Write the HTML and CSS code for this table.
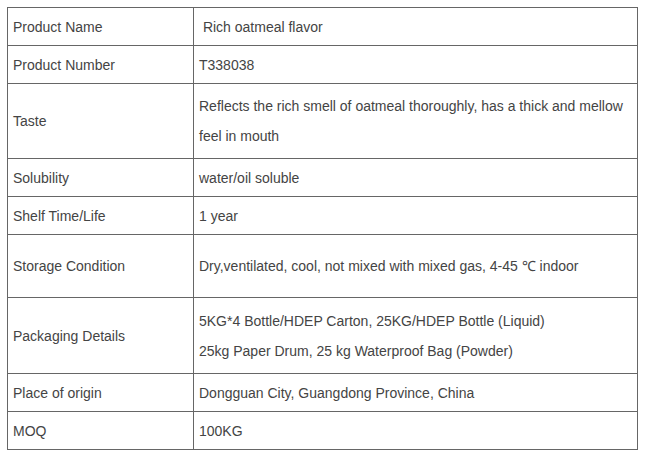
FILE: index.html
```html
<!DOCTYPE html>
<html>
<head>
<meta charset="utf-8">
<link rel="stylesheet" href="styles.css">
</head>
<body>
<table class="spec">
  <tr class="r38"><td class="k">Product Name</td><td class="v">&nbsp;Rich oatmeal flavor</td></tr>
  <tr class="r38"><td class="k">Product Number</td><td class="v">T338038</td></tr>
  <tr class="r75"><td class="k">Taste</td><td class="v">Reflects the rich smell of oatmeal thoroughly, has a thick and mellow feel in mouth</td></tr>
  <tr class="r38"><td class="k">Solubility</td><td class="v">water/oil soluble</td></tr>
  <tr class="r38"><td class="k">Shelf Time/Life</td><td class="v">1 year</td></tr>
  <tr class="r63"><td class="k">Storage Condition</td><td class="v">Dry,ventilated, cool, not mixed with mixed gas, 4-45 ℃ indoor</td></tr>
  <tr class="r76"><td class="k">Packaging Details</td><td class="v">5KG*4 Bottle/HDEP Carton, 25KG/HDEP Bottle (Liquid)<br>25kg Paper Drum, 25 kg Waterproof Bag (Powder)</td></tr>
  <tr class="r38"><td class="k">Place of origin</td><td class="v">Dongguan City, Guangdong Province, China</td></tr>
  <tr class="r38"><td class="k">MOQ</td><td class="v">100KG</td></tr>
</table>
</body>
</html>
```

FILE: styles.css
```css
html, body {
  margin: 0;
  padding: 0;
  background: #fff;
}
body {
  padding: 7px 0 0 7px;
  font-family: "Liberation Sans", Arial, sans-serif;
  font-size: 14px;
  color: #444;
}
.spec {
  border-collapse: collapse;
  width: 631px;
  table-layout: fixed;
}
.spec td {
  border: 1px solid #666;
  padding: 0 5px;
  line-height: 30px;
  vertical-align: middle;
}
.spec td.k {
  width: 175px;
}
.r38 td { height: 37px; }
.r75 td { height: 74px; }
.r63 td { height: 62px; }
.r76 td { height: 75px; }
```
